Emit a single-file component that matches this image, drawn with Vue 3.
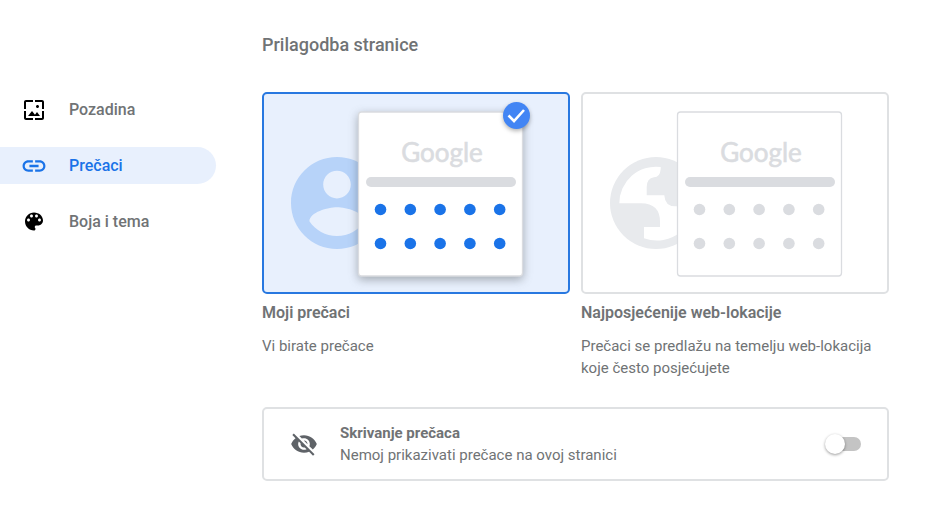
<template>
  <div class="page">
    <nav class="sidebar">
      <a
        v-for="item in menu"
        :key="item.id"
        href="#"
        class="menu-item"
        :class="{ active: item.id === activeMenu }"
        @click.prevent="activeMenu = item.id"
      >
        <svg class="menu-icon" :viewBox="item.box">
          <path :d="item.icon" />
        </svg>
        <span>{{ item.title }}</span>
      </a>
    </nav>

    <main class="content">
      <h1>Prilagodba stranice</h1>

      <div class="options">
        <label v-for="opt in options" :key="opt.id" class="option" :class="{ selected: opt.id === picked }">
          <input v-model="picked" type="radio" name="shortcuts" :value="opt.id" class="option-radio" />
          <span class="preview">
            <svg class="preview-art" viewBox="0 0 304 198">
              <g v-if="opt.id === 'mine'" class="art-icon" transform="translate(17.8 53.8) scale(4.6)">
                <path d="M12 2C6.48 2 2 6.48 2 12s4.48 10 10 10 10-4.48 10-10S17.52 2 12 2zm0 3c1.66 0 3 1.34 3 3s-1.34 3-3 3-3-1.34-3-3 1.34-3 3-3zm0 14.2c-2.5 0-4.71-1.28-6-3.22.03-1.99 4-3.08 6-3.08 1.99 0 5.97 1.09 6 3.08-1.29 1.94-3.5 3.22-6 3.22z" />
              </g>
              <g v-else class="art-icon">
                <circle cx="73" cy="109" r="46" />
                <path class="art-land" d="M36.3 109.3A36.5 36.5 0 0 1 77.7 73V75Q77 83.3 71 83.3Q63.7 84.5 63.7 93V101.3H81.3Q82 112.3 92 112.3H98V137.5A36.5 36.5 0 0 1 61 144.2V133H77V128Q77 109.3 58 109.3Z" />
              </g>
              <rect class="art-panel" x="94.5" y="18" width="164" height="164" rx="3" />
              <text class="art-logo" x="178" y="68" text-anchor="middle">Google</text>
              <rect class="art-bar" x="102" y="83" width="150" height="10" rx="5" />
              <template v-for="y in [115.5, 149.5]" :key="y">
                <circle v-for="n in 5" :key="n" class="art-dot" :cx="86.7 + n * 29.8" :cy="y" r="5.8" />
              </template>
              <g v-if="opt.id === picked" class="art-check">
                <circle cx="252.5" cy="21.5" r="13.5" />
                <path d="M244.500 21.500l5.500 5.500 10-11" />
              </g>
            </svg>
          </span>
          <span class="option-title">{{ opt.title }}</span>
          <span class="option-text">{{ opt.text }}</span>
        </label>
      </div>

      <div class="hide-box">
        <svg class="hide-icon" viewBox="0 0 24 24">
          <path d="M12 7c2.760 0 5 2.240 5 5 0 .65-.13 1.260-.36 1.830l2.920 2.920c1.510-1.260 2.700-2.890 3.430-4.750-1.730-4.390-6-7.500-11-7.500-1.400 0-2.740.25-3.980.7l2.160 2.160C10.740 7.130 11.350 7 12 7zM2 4.270l2.280 2.280.46.46C3.080 8.300 1.780 10.020 1 12c1.730 4.390 6 7.500 11 7.500 1.550 0 3.030-.3 4.380-.84l.42.42L19.730 22 21 20.730 3.270 3 2 4.270zM7.530 9.800l1.550 1.550c-.05.21-.08.43-.08.65 0 1.660 1.340 3 3 3 .22 0 .44-.03.65-.08l1.550 1.550c-.67.33-1.410.53-2.200.53-2.760 0-5-2.240-5-5 0-.79.2-1.530.53-2.200zm4.310-.78l3.150 3.150.02-.16c0-1.660-1.340-3-3-3l-.17.01z" />
        </svg>
        <label class="hide-label" for="hide-toggle">
          <span class="hide-title">Skrivanje prečaca</span>
          <span>Nemoj prikazivati prečace na ovoj stranici</span>
        </label>
        <input id="hide-toggle" v-model="hidden" type="checkbox" role="switch" class="toggle" />
      </div>
    </main>
  </div>
</template>

<script setup>
import { ref } from 'vue'

const activeMenu = ref('shortcuts')
const picked = ref('mine')
const hidden = ref(false)

const menu = [
  {
    id: 'background',
    title: 'Pozadina',
    box: '0 0 24 24',
    icon: 'M4 4h7V2H4c-1.100 0-2 .9-2 2v7h2V4zm6 9l-4 5h12l-3-4-2.030 2.710L10 13zm7-4.500c0-.83-.67-1.500-1.500-1.500S14 7.670 14 8.500s.67 1.500 1.500 1.500S17 9.330 17 8.500zM20 2h-7v2h7v7h2V4c0-1.100-.9-2-2-2zm0 18h-7v2h7c1.100 0 2-.9 2-2v-7h-2v7zM4 13H2v7c0 1.100.9 2 2 2h7v-2H4v-7z'
  },
  {
    id: 'shortcuts',
    title: 'Prečaci',
    box: '1.5 1.5 21 21',
    icon: 'M3.900 12c0-1.710 1.390-3.100 3.100-3.100h4V7H7c-2.760 0-5 2.240-5 5s2.240 5 5 5h4v-1.900H7c-1.710 0-3.100-1.390-3.100-3.100zM8 13h8v-2H8v2zm9-6h-4v1.900h4c1.710 0 3.100 1.390 3.100 3.100s-1.390 3.100-3.100 3.100h-4V17h4c2.760 0 5-2.240 5-5s-2.240-5-5-5z'
  },
  {
    id: 'theme',
    title: 'Boja i tema',
    box: '0 0.5 24 24',
    icon: 'M12 3c-4.970 0-9 4.030-9 9s4.030 9 9 9c.83 0 1.500-.67 1.500-1.500 0-.39-.15-.74-.39-1.010-.23-.26-.38-.61-.38-.99 0-.83.67-1.500 1.500-1.500H16c2.760 0 5-2.240 5-5 0-4.420-4.030-8-9-8zm-5.500 9c-.83 0-1.500-.67-1.500-1.500S5.670 9 6.500 9 8 9.670 8 10.500 7.330 12 6.500 12zm3-4C8.670 8 8 7.330 8 6.500S8.670 5 9.500 5s1.500.67 1.500 1.500S10.330 8 9.500 8zm5 0c-.83 0-1.500-.67-1.500-1.500S13.670 5 14.500 5s1.500.67 1.500 1.500S15.330 8 14.500 8zm3 4c-.83 0-1.500-.67-1.500-1.500S16.670 9 17.500 9s1.500.67 1.500 1.500-.67 1.500-1.500 1.500z'
  }
]

const options = [
  { id: 'mine', title: 'Moji prečaci', text: 'Vi birate prečace' },
  {
    id: 'visited',
    title: 'Najposjećenije web-lokacije',
    text: 'Prečaci se predlažu na temelju web-lokacija koje često posjećujete'
  }
]
</script>

<style>
body {
  background: #fff;
}
</style>

<style scoped>
.page {
  display: flex;
  gap: 46px;
  font-family: Roboto, "Liberation Sans", sans-serif;
  font-size: 15px;
  line-height: 22px;
  color: #707375;
}

.sidebar {
  flex: 0 0 216px;
  display: flex;
  flex-direction: column;
  gap: 19px;
  padding-top: 91px;
}

.menu-item {
  display: flex;
  align-items: center;
  gap: 23px;
  height: 37px;
  padding-left: 22px;
  border-radius: 0 19px 19px 0;
  color: #707375;
  font-size: 16px;
  font-weight: 500;
  text-decoration: none;
}

.menu-icon {
  width: 24px;
  height: 24px;
  fill: #000;
}

.menu-item.active {
  background: #e8f0fd;
  color: #1a73e8;
}

.menu-item.active .menu-icon {
  fill: #1a73e8;
}

.content {
  flex: 1;
  min-width: 0;
  padding: 33px 58px 48px 0;
}

h1 {
  margin: 0 0 35px;
  font-size: 18px;
  line-height: 24px;
  font-weight: 500;
}

.options {
  display: grid;
  grid-template-columns: 1fr 1fr;
  gap: 11px;
}

.option {
  position: relative;
  display: flex;
  flex-direction: column;
  cursor: pointer;
}

.option-radio {
  position: absolute;
  opacity: 0;
  margin: 0;
}

.preview {
  border: 2px solid #dfe1e3;
  border-radius: 5px;
  overflow: hidden;
}

.preview-art {
  display: block;
  width: 100%;
}

.selected .preview {
  border-color: #2878e0;
  background: #e8f0fd;
}

.option-title {
  margin: 8px 0 11px;
  font-size: 16px;
  font-weight: 600;
}

.art-icon {
  fill: #e8eaed;
}

.art-land {
  fill: #fff;
}

.art-panel {
  fill: #fff;
  stroke: #dadce0;
  stroke-width: 1.3;
}

.art-logo {
  fill: #dadce0;
  stroke: #dadce0;
  stroke-width: 0.6;
  font-family: Lato, "Open Sans", sans-serif;
  font-size: 26px;
  font-weight: 400;
}

.art-bar,
.art-dot {
  fill: #dadce0;
}

.selected .art-icon {
  fill: #b7d3f9;
}

.selected .art-panel {
  filter: drop-shadow(0 3px 5px rgba(60, 64, 67, 0.4));
}

.selected .art-dot {
  fill: #1a73e8;
}

.art-check circle {
  fill: #4285f4;
  filter: drop-shadow(0 2px 2px rgba(0, 0, 0, 0.3));
}

.art-check path {
  fill: none;
  stroke: #fff;
  stroke-width: 2.6;
}

.hide-box {
  display: flex;
  align-items: center;
  margin-top: 28px;
  padding: 13px 26px;
  border: 2px solid #dfe1e3;
  border-radius: 5px;
}

.hide-icon {
  flex: none;
  width: 28px;
  height: 28px;
  margin-right: 22px;
  fill: #5f6368;
}

.hide-label {
  flex: 1;
  display: flex;
  flex-direction: column;
}

.hide-title {
  font-weight: 700;
}

.toggle {
  appearance: none;
  position: relative;
  width: 36px;
  height: 20px;
  margin: 0;
  cursor: pointer;
}

.toggle::before {
  content: '';
  position: absolute;
  inset: 3px 0 3px 3px;
  border-radius: 7px;
  background: #c4c4c4;
}

.toggle::after {
  content: '';
  position: absolute;
  top: 0;
  left: 0;
  width: 20px;
  height: 20px;
  border-radius: 50%;
  background: #fff;
  box-shadow: 0 1px 3px rgba(0, 0, 0, 0.4);
}

.toggle:checked::before {
  background: #8ab4f8;
}

.toggle:checked::after {
  left: 16px;
  background: #1a73e8;
}
</style>
